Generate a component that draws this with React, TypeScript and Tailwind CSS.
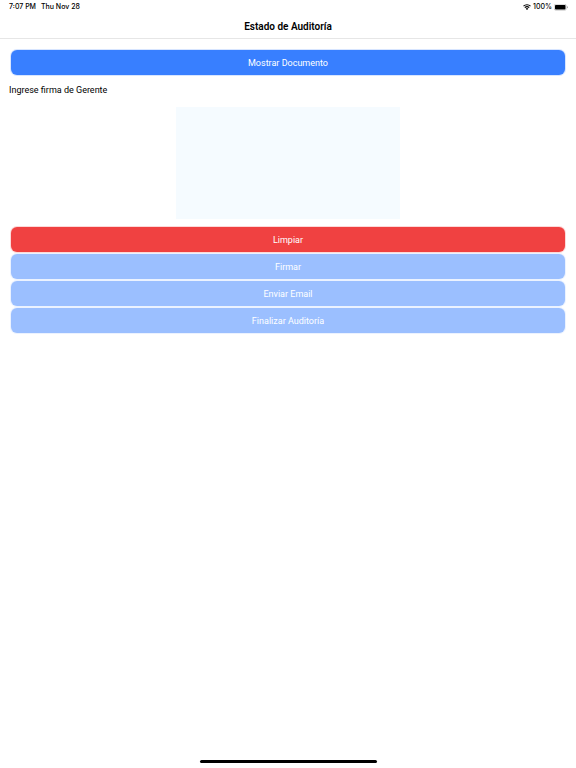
import React from "react";

const buttonBase =
  "h-[25px] w-full rounded-[6px] text-[9px] leading-3 text-white";

function StatusBar() {
  return (
    <div className="flex h-[14px] items-center justify-between pr-2 pl-[9px] font-['Inter','Liberation_Sans',sans-serif] text-[7px] leading-[14px] font-medium">
      <div className="flex gap-[5px]">
        <span>7:07 PM</span>
        <span>Thu Nov 28</span>
      </div>
      <div className="flex items-center gap-[2px]">
        <svg width="8" height="6" viewBox="0 0 16 12" aria-label="Wi-Fi">
          <path
            d="M1 4.4a10 10 0 0 1 14 0M3.6 7.4a6.3 6.3 0 0 1 8.8 0"
            fill="none"
            stroke="#000"
            strokeWidth="2.2"
          />
          <path d="M8 12 5.4 9.3a3.8 3.8 0 0 1 5.2 0Z" />
        </svg>
        <span>100%</span>
        <svg width="14" height="7" viewBox="0 0 28 14" aria-label="Batería">
          <rect
            x="0.5"
            y="0.5"
            width="24"
            height="12"
            rx="3"
            fill="none"
            stroke="#a3a3a3"
          />
          <rect x="2" y="2" width="21" height="9" rx="1.5" />
          <path d="M26 4.5a2 2 0 0 1 0 4Z" fill="#a3a3a3" />
        </svg>
      </div>
    </div>
  );
}

export default function App() {
  return (
    <div className="flex min-h-screen flex-col bg-white font-['Roboto','Liberation_Sans',sans-serif] text-black">
      <header className="border-b border-[#e6e6e6]">
        <StatusBar />
        <h1 className="pt-[2px] text-center text-[10px] leading-[22px] font-semibold">
          Estado de Auditoría
        </h1>
      </header>
      <main className="flex flex-1 flex-col px-[11px] pt-[11px]">
        <button
          type="button"
          className={`${buttonBase} bg-[#387fff] ring-1 ring-[#387fff]/20`}
        >
          Mostrar Documento
        </button>
        <h2 className="-ml-[2px] pt-2 text-[9px] leading-[14px]">
          Ingrese firma de Gerente
        </h2>
        <canvas
          aria-label="Firma de Gerente"
          className="mt-[10px] h-28 w-56 self-center bg-[#f5fbff]"
        />
        <div className="mt-2 flex flex-col gap-[2px]">
          <button
            type="button"
            className={`${buttonBase} bg-[#f04141] ring-1 ring-[#f04141]/20`}
          >
            Limpiar
          </button>
          <button
            type="button"
            disabled
            className={`${buttonBase} bg-[#9bbfff] ring-1 ring-[#9bbfff]/20`}
          >
            Firmar
          </button>
          <button
            type="button"
            disabled
            className={`${buttonBase} bg-[#9bbfff] ring-1 ring-[#9bbfff]/20`}
          >
            Enviar Email
          </button>
          <button
            type="button"
            disabled
            className={`${buttonBase} bg-[#9bbfff] ring-1 ring-[#9bbfff]/20`}
          >
            Finalizar Auditoría
          </button>
        </div>
      </main>
      <footer className="flex justify-center pb-[5px]">
        <div className="h-[3px] w-[177px] rounded-full bg-black" />
      </footer>
    </div>
  );
}
